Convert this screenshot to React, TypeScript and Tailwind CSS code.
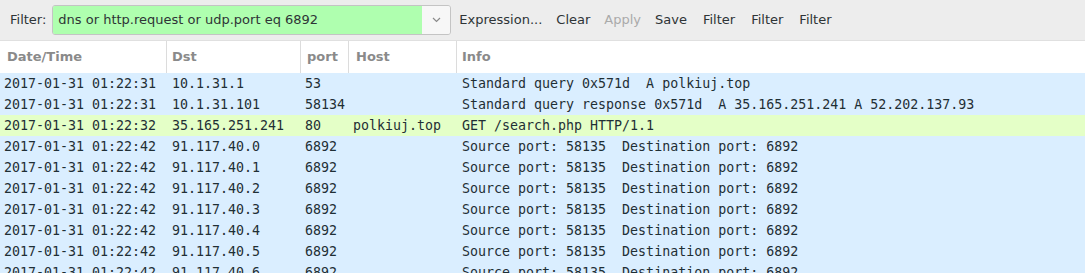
const rows = [
  { time: "2017-01-31 01:22:31", dst: "10.1.31.1", port: "53", host: "", info: "Standard query 0x571d  A polkiuj.top", http: false },
  { time: "2017-01-31 01:22:31", dst: "10.1.31.101", port: "58134", host: "", info: "Standard query response 0x571d  A 35.165.251.241 A 52.202.137.93", http: false },
  { time: "2017-01-31 01:22:32", dst: "35.165.251.241", port: "80", host: "polkiuj.top", info: "GET /search.php HTTP/1.1", http: true },
  { time: "2017-01-31 01:22:42", dst: "91.117.40.0", port: "6892", host: "", info: "Source port: 58135  Destination port: 6892", http: false },
  { time: "2017-01-31 01:22:42", dst: "91.117.40.1", port: "6892", host: "", info: "Source port: 58135  Destination port: 6892", http: false },
  { time: "2017-01-31 01:22:42", dst: "91.117.40.2", port: "6892", host: "", info: "Source port: 58135  Destination port: 6892", http: false },
  { time: "2017-01-31 01:22:42", dst: "91.117.40.3", port: "6892", host: "", info: "Source port: 58135  Destination port: 6892", http: false },
  { time: "2017-01-31 01:22:42", dst: "91.117.40.4", port: "6892", host: "", info: "Source port: 58135  Destination port: 6892", http: false },
  { time: "2017-01-31 01:22:42", dst: "91.117.40.5", port: "6892", host: "", info: "Source port: 58135  Destination port: 6892", http: false },
  { time: "2017-01-31 01:22:42", dst: "91.117.40.6", port: "6892", host: "", info: "Source port: 58135  Destination port: 6892", http: false },
];

const actions = ["Expression...", "Clear", "Apply", "Save", "Filter", "Filter", "Filter"];

export default function App() {
  return (
    <div className="h-[273px] w-[1085px] overflow-hidden bg-white font-['DejaVu_Sans',sans-serif] text-[13px] text-[#2e3436]">
      {/* Filter toolbar */}
      <div className="flex h-[41px] items-center border-b border-[#e0e0e0] bg-[#ededed] pl-[10px]">
        <span className="mr-[6px]">Filter:</span>
        <div className="flex h-[30px] w-[399px] overflow-hidden rounded-[3px] border border-[#c4c4c4]">
          <div className="flex flex-1 items-center bg-[#afffaf] pl-[5px]">
            dns or http.request or udp.port eq 6892
          </div>
          <div className="flex w-[28px] items-center justify-center bg-[#f7f7f7]">
            <svg width="9" height="6" viewBox="0 0 9 6" fill="none">
              <path d="M1 1l3.5 3.5L8 1" stroke="#8a8a8a" strokeWidth="1.2" />
            </svg>
          </div>
        </div>
        <div className="ml-[1px] flex">
          {actions.map((a, i) => (
            <span
              key={i}
              className={`${a === "Filter" ? "px-[8px]" : "px-[7px]"} ${a === "Apply" ? "text-[#aaaaaa]" : ""} ${a === "Filter" && i === 4 ? "ml-[1px]" : ""}`}
            >
              {a}
            </span>
          ))}
        </div>
      </div>

      {/* Column header */}
      <div className="flex h-[32px] items-center font-semibold text-[#8a8a8a]">
        <div className="flex h-full w-[167px] items-center border-r border-[#dcdcdc] pl-[7px]">Date/Time</div>
        <div className="flex h-full w-[134px] items-center border-r border-[#dcdcdc] pl-[5px]">Dst</div>
        <div className="flex h-full w-[48px] items-center border-r border-[#dcdcdc] pl-[6px]">port</div>
        <div className="flex h-full w-[108px] items-center border-r border-[#dcdcdc] pl-[7px]">Host</div>
        <div className="flex h-full flex-1 items-center pl-[5px]">Info</div>
      </div>

      {/* Packet rows */}
      <div className="font-['DejaVu_Sans_Mono',monospace] text-[13.3px] text-[#1f2f35]">
        {rows.map((r, i) => (
          <div
            key={i}
            className={`flex h-[21px] items-center whitespace-pre ${r.http ? "bg-[#e4ffc7]" : "bg-[#daeeff]"}`}
          >
            <div className="w-[167px] pl-[4px]">{r.time}</div>
            <div className="w-[134px] pl-[5px]">{r.dst}</div>
            <div className="w-[48px] pl-[4px]">{r.port}</div>
            <div className="w-[108px] pl-[4px]">{r.host}</div>
            <div className="flex-1 pl-[5px]">{r.info}</div>
          </div>
        ))}
      </div>
    </div>
  );
}
